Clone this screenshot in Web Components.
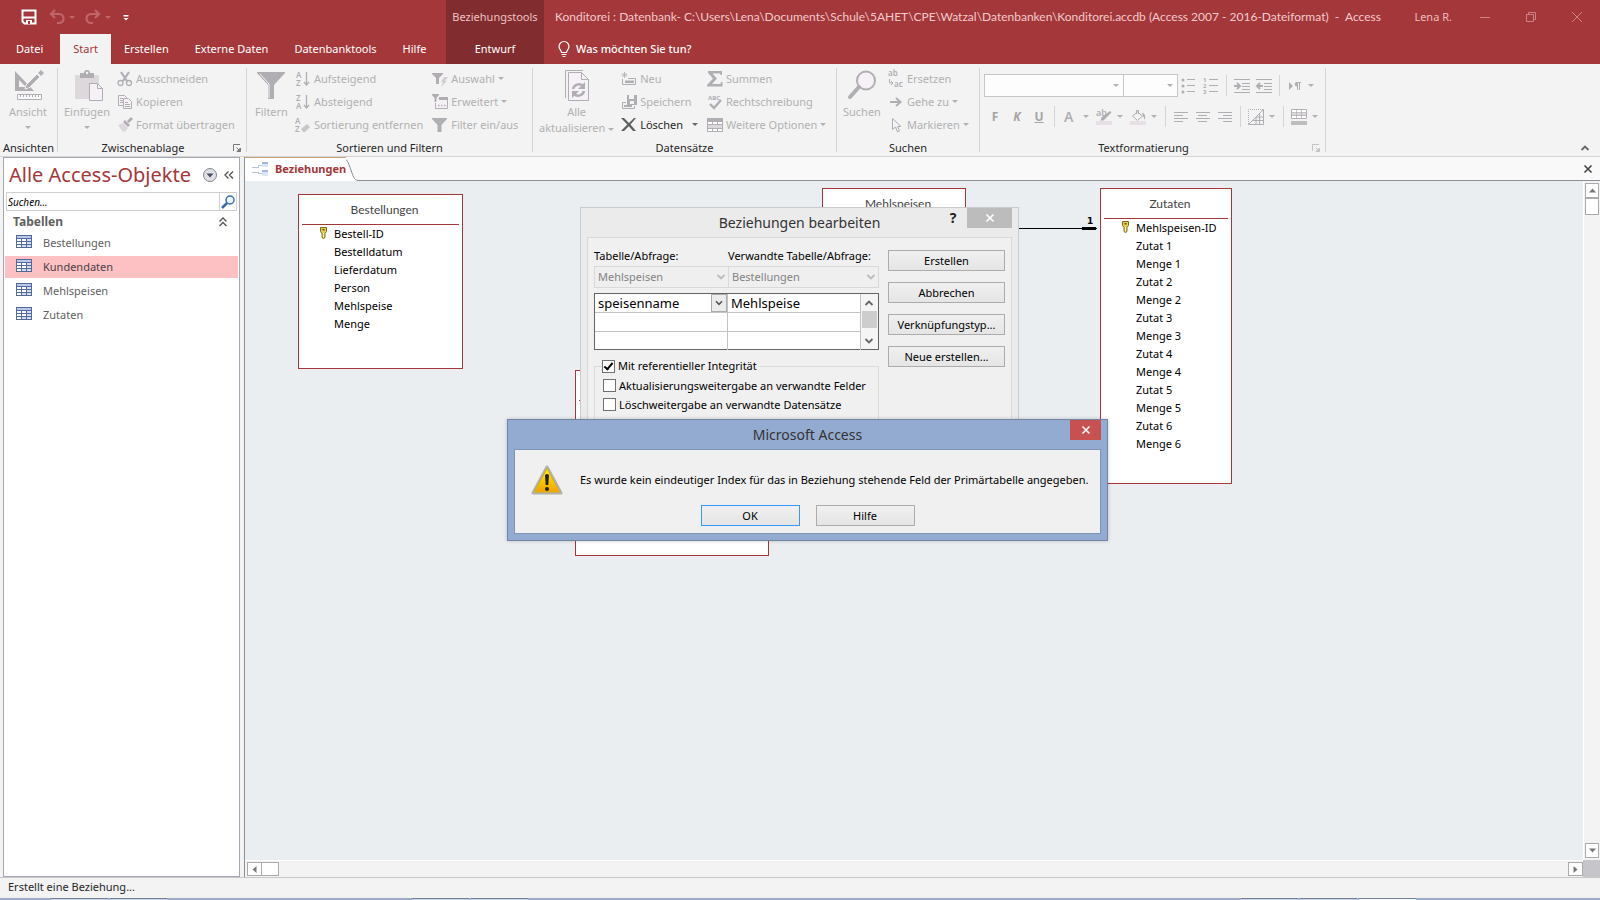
<!DOCTYPE html>
<html lang="de">
<head>
<meta charset="utf-8">
<meta name="viewport" content="width=device-width, initial-scale=1">
<title>Konditorei - Access</title>
<style>
    html, body {
        height: 100%;
        margin: 0;
        overflow: hidden;
    }
    body {
        font: 11px/16px "Noto Sans", "Open Sans", sans-serif;
        color: #262626;
        background: #f3f3f3;
    }
</style>
</head>
<body>
<access-app></access-app>

<script>
// shared by all elements: put the template into an open shadow root
class BaseElement extends HTMLElement {
    constructor() {
        super();
        this.attachShadow({mode: "open"});
    }
    connectedCallback() {
        var template = document.createElement("template");
        template.innerHTML = this.render();
        this.shadowRoot.replaceChildren(template.content.cloneNode(true));
    }
    attr(name) {
        return this.getAttribute(name) || "";
    }
}

// ICONS: [viewBox size, markup]
var icons = {
    save: [16, `<path d="M1.5 1.5h13v13h-11l-2-2z" fill="none" stroke="currentColor" stroke-width="2"/><path d="M2 8.500h12" stroke="currentColor" stroke-width="2"/><path d="M5 11h6v4H5z" fill="currentColor"/><path d="M7 12h2v3H7z" fill="#a4373a"/>`],
    undo: [16, `<path d="M6 1L2 5l4 4M2.500 5H10a4 4 0 0 1 0 9H8" fill="none" stroke="currentColor" stroke-width="2.200"/>`],
    redo: [16, `<path d="M10 1l4 4-4 4M13.500 5H6a4 4 0 0 0 0 9h2" fill="none" stroke="currentColor" stroke-width="2.200"/>`],
    customize: [16, `<path d="M5.500 6h5v1.500h-5zM5.500 9h5L8 11.500z" fill="currentColor"/>`],
    bulb: [16, `<path d="M5.500 11.500c0-2-2.500-3-2.500-6a5 5 0 0 1 10 0c0 3-2.500 4-2.500 6zM5.500 13.500h5M6.500 15.500h3" fill="none" stroke="currentColor" stroke-width="1.200"/>`],
    min: [16, `<path d="M3 8.500h10" stroke="currentColor"/>`],
    restore: [16, `<path d="M3.500 5.500h7v7h-7zM5.500 5.500v-2h7v7h-2" fill="none" stroke="currentColor"/>`],
    close: [16, `<path d="M3 3l10 10M13 3L3 13" stroke="currentColor"/>`],
    cross: [16, `<path d="M4.500 4.500l7 7M11.500 4.500l-7 7" stroke="currentColor" stroke-width="1.600"/>`],
    view: [32, `<path d="M3 2l19 20H3zM7 11v7h7z" fill="currentColor" fill-rule="evenodd"/><path d="M29 1l3 3-3 3-3-3z" fill="currentColor"/><path d="M25 5l3 3-11 11-4 1 1-4z" fill="currentColor" stroke="#f3f3f3"/><path d="M12 22l5-3 5 3z" fill="currentColor"/><path d="M5.500 25.500h24v5h-24z" fill="#faf8fb" stroke="currentColor"/><path d="M8.500 26v2M11.500 26v2M14.500 26v2M17.500 26v2M20.500 26v2M23.500 26v2M26.500 26v2" stroke="currentColor"/>`],
    paste: [32, `<path d="M4 6h24v24H4z" fill="#dcd8dc"/><path d="M9 4h4a3 3 0 0 1 6 0h4v5H9z" fill="currentColor"/><circle cx="16" cy="4" r="1.200" fill="#f3f3f3"/><path d="M18.500 14.500h8l5 5v12h-13z" fill="#f5f1f7" stroke="currentColor"/><path d="M26.500 14.500v5h5" fill="none" stroke="currentColor"/>`],
    cut: [16, `<path d="M4 1l6 9M12 1L6 10" stroke="currentColor" stroke-width="2.200"/><circle cx="3.500" cy="12" r="2.500" fill="none" stroke="currentColor" stroke-width="1.300"/><circle cx="12" cy="12" r="2.500" fill="none" stroke="currentColor" stroke-width="1.300"/>`],
    copy: [16, `<path d="M1.500 1.500h6l2 2v8h-8z" fill="#f5f1f7" stroke="currentColor"/><path d="M3 4.500h3M3 6.500h3M3 8.500h3" stroke="currentColor"/><path d="M6.500 4.500h5l3 3v7h-8z" fill="#f5f1f7" stroke="currentColor"/><path d="M8 8.500h3M8 10.500h5M8 12.500h5" stroke="currentColor"/>`],
    brush: [16, `<path d="M1 8l5-2 5 5-3 4-3-1z" fill="#dcd8dc"/><path d="M6 5l2-2 5 5-2 2z" fill="currentColor"/><path d="M10 4l4-4 2 2-4 4z" fill="currentColor"/>`],
    filterbig: [32, `<path d="M2 3h28v1L19 16v14h-6V16L2 4z" fill="currentColor"/><path d="M5 5l9 10v14" fill="none" stroke="#f3f3f3"/>`],
    az: [16, `<g fill="currentColor" font-family="Noto Sans, sans-serif" font-weight="600" font-size="8"><text x="1" y="7">A</text><text x="1" y="15">Z</text></g><path d="M11.500 1v12M9 11l2.500 3 2.500-3" fill="none" stroke="currentColor" stroke-width="1.300"/>`],
    za: [16, `<g fill="currentColor" font-family="Noto Sans, sans-serif" font-weight="600" font-size="8"><text x="1" y="7">Z</text><text x="1" y="15">A</text></g><path d="M11.500 1v12M9 11l2.500 3 2.500-3" fill="none" stroke="currentColor" stroke-width="1.300"/>`],
    azclear: [16, `<g fill="currentColor" font-family="Noto Sans, sans-serif" font-weight="600" font-size="8"><text x="0" y="7">A</text><text x="0" y="15">Z</text></g><path d="M6 12l6-5 3 3-5 5H8z" fill="#c9c6ca"/>`],
    selection: [16, `<path d="M0 2h11v1L7 7v6H4V7L0 3z" fill="currentColor"/><path d="M12 6h4l-3 4h2l-6 6 2-5H9z" fill="#d3cfd4"/>`],
    advanced: [16, `<path d="M0 0h7v1L4.500 4v4h-2V4L0 1z" fill="currentColor"/><path d="M3.500 9v5.500h12v-10h-9" fill="#f5f1f7" stroke="currentColor"/><path d="M7 3h9v3H7z" fill="currentColor"/><path d="M6 11.500h1.500M9 11.500h1.500M12 11.500h1.500" stroke="currentColor" stroke-width="1.500"/>`],
    filter: [16, `<path d="M0 1h15v1L9.500 8v7h-4V8L0 2z" fill="currentColor"/>`],
    refresh: [32, `<path d="M4.500 29V1.500H22" fill="none" stroke="currentColor"/><path d="M7.500 3.500h13l7 7v21h-20z" fill="#f5f1f7" stroke="currentColor"/><path d="M20.500 3.500v7h7" fill="none" stroke="currentColor"/><path d="M12 20a6 6 0 0 1 10-3M23 22a6 6 0 0 1-10 3" fill="none" stroke="currentColor" stroke-width="2.500"/><path d="M24 13v7h-7zM11 29v-7h7z" fill="currentColor"/>`],
    create: [16, `<path d="M1.500 8v5.500h13v-6H7" fill="none" stroke="currentColor"/><path d="M4 9.500h9v2.500H4z" fill="currentColor"/><path d="M3.500 1v6M.5 4h6M1.500 2l4 4M5.500 2l-4 4" stroke="currentColor" stroke-width=".8"/>`],
    saverec: [16, `<path d="M6 1h10v10H6z" fill="currentColor"/><path d="M8 1h5v4H8zM9 7h4v3H9z" fill="#f3f3f3"/><path d="M5 8.500H1.500v6h12V12" fill="none" stroke="currentColor"/><path d="M3 11h8v2H3z" fill="currentColor"/>`],
    remove: [16, `<path d="M0 1l3 0 5 5 5-5h2L9.500 7.500 15 14h-3L7.800 9.300 3 14H0l6.300-6.500z" fill="#5f5f5f"/>`],
    sum: [16, `<path d="M1 0h14v4h-1.500L13 2.500H5.500L10 7.500 5 13h8.500l.5-2h1.500v4.500H0V14l6-6.500L1 2z" fill="currentColor"/>`],
    spell: [16, `<text x="1" y="6" fill="currentColor" font-family="Noto Sans, sans-serif" font-weight="700" font-size="6">ABC</text><path d="M3 10l4 4 7-8" fill="none" stroke="currentColor" stroke-width="2.400"/>`],
    more: [16, `<path d="M0 1h16v14H0z" fill="currentColor"/><path d="M1 5h4v2H1zM6 5h4v2H6zM11 5h4v2h-4zM1 12h4v2H1zM6 12h4v2H6zM11 12h4v2h-4z" fill="#fff"/><path d="M1 8h14v3H1z" fill="#dcd8dc"/>`],
    find: [32, `<circle cx="20" cy="11.500" r="9" fill="#f5f1f7" stroke="currentColor" stroke-width="2"/><path d="M13 18L4 28" stroke="currentColor" stroke-width="4" stroke-linecap="round"/>`],
    replace: [16, `<g fill="currentColor" font-family="Noto Sans, sans-serif" font-weight="600" font-size="8"><text x="0" y="5">ab</text><text x="6" y="16">ac</text></g><path d="M1.500 8v4H4M3 10l2 2-2 2" fill="none" stroke="currentColor"/>`],
    goto: [16, `<path d="M2 8h9M8 4l4.500 4L8 12" fill="none" stroke="currentColor" stroke-width="2"/>`],
    pointer: [16, `<path d="M4.500 1.500v11l3-2.500 2 5 2-1-2-4.500h3.500z" fill="#f5f1f7" stroke="currentColor"/>`],
    bullets: [16, `<g fill="currentColor"><circle cx="2" cy="2" r="1.500"/><circle cx="2" cy="8" r="1.500"/><circle cx="2" cy="14" r="1.500"/></g><path d="M6 1.500h8M6 7.500h8M6 13.500h8" stroke="currentColor"/>`],
    numbers: [16, `<g fill="currentColor" font-family="Noto Sans, sans-serif" font-weight="700" font-size="6"><text x="0" y="4">1</text><text x="0" y="10">2</text><text x="0" y="16">3</text></g><path d="M6 1.500h9M6 7.500h9M6 13.500h9" stroke="currentColor"/>`],
    indent: [16, `<path d="M0 1.500h16M8 5.500h8M8 8.500h8M8 11.500h8M0 14.500h16" stroke="currentColor"/><path d="M0 8h5M3 5l3 3-3 3" fill="none" stroke="currentColor" stroke-width="2"/>`],
    outdent: [16, `<path d="M0 1.500h16M8 5.500h8M8 8.500h8M8 11.500h8M0 14.500h16" stroke="currentColor"/><path d="M2 8h5M4 5L1 8l3 3" fill="none" stroke="currentColor" stroke-width="2"/>`],
    para: [16, `<path d="M2 4l4 4-4 4zM10 4h4v1h-1v7h-1V5h-1v7h-1V8.500a2 2 0 0 1 0-4.500z" fill="currentColor"/>`],
    fontcolor: [16, `<text x="2" y="13" fill="currentColor" font-family="Noto Sans, sans-serif" font-weight="600" font-size="14">A</text>`],
    highlight: [16, `<text x="0" y="7" fill="currentColor" font-family="Noto Sans, sans-serif" font-weight="600" font-size="9">ab</text><path d="M14 2l1.500 1.500-8 8-3 0 1-3z" fill="currentColor"/><path d="M0 12h16v4H0z" fill="#e6e0e6"/>`],
    bucket: [16, `<path d="M2.500 7l5-4 5 4-5 4.500zM6.500 5V1.500h2V5" fill="none" stroke="currentColor"/><path d="M12 4c3 0 3.500 3 3 7l-2-4z" fill="currentColor"/><path d="M0 12h16v4H0z" fill="#e6e0e6"/>`],
    left: [16, `<path d="M1 3.500h14M1 6.500h9M1 9.500h14M1 12.500h9" stroke="currentColor"/>`],
    center: [16, `<path d="M1 3.500h14M3 6.500h9M1 9.500h14M3 12.500h9" stroke="currentColor"/>`],
    right: [16, `<path d="M1 3.500h14M6 6.500h9M1 9.500h14M6 12.500h9" stroke="currentColor"/>`],
    gridlines: [16, `<path d="M.5 15V.5H15" fill="none" stroke="currentColor" stroke-dasharray="1 1"/><path d="M.5 15.500L15.500.5v15zM8 8v7M11.500 4v11M8 8h7M4.500 11.500h11" fill="none" stroke="currentColor"/>`],
    rowcolor: [16, `<path d="M.5 .5h15v9H.5z" fill="#fff" stroke="currentColor"/><path d="M1 4h14v3H1z" fill="#dcd8dc"/><path d="M5.500 1v8M10.500 1v8M1 3.500h14M1 6.500h14" stroke="currentColor" stroke-width=".7"/><path d="M0 12h16v4H0z" fill="#bdbdbd"/>`],
    launcher: [9, `<path d="M.5 7V.5H7" fill="none" stroke="currentColor"/><path d="M3.500 3.500L6 6" stroke="currentColor"/><path d="M7.500 4v3.500H4z" fill="currentColor" stroke="currentColor"/>`],
    up: [16, `<path d="M4.500 10L8 6.500l3.500 3.500" fill="none" stroke="currentColor" stroke-width="1.800"/>`],
    down: [16, `<path d="M4.500 6L8 9.500 11.500 6" fill="none" stroke="currentColor" stroke-width="1.800"/>`],
    table: [16, `<path d="M0 1h16v13H0z" fill="#53699b"/><path d="M1 2h14v2H1z" fill="#b7c8e8"/><path d="M1 5h4v2H1zM6 5h4v2H6zM1 8h4v2H1zM6 8h4v2H6zM1 11h4v2H1z" fill="#fff"/><path d="M11 5h4v2h-4zM11 8h4v2h-4zM6 11h4v2H6zM11 11h4v2h-4z" fill="#cfdcf3"/>`],
    shutter: [16, `<circle cx="8" cy="8" r="6.500" fill="#dfe1e7" stroke="#85878e"/><path d="M4.500 6.500h7L8 10.500z" fill="#4b4e5c"/>`],
    collapse: [16, `<path d="M7.500 4.500L4 8l3.500 3.500M12 4.500L8.500 8l3.500 3.500" fill="none" stroke="#555" stroke-width="1.400"/>`],
    chevrons: [16, `<path d="M4.500 7.500L8 4l3.500 3.500M4.500 12L8 8.500l3.500 3.500" fill="none" stroke="#555" stroke-width="1.300"/>`],
    search: [16, `<circle cx="10" cy="6" r="4" fill="#eef5fd" stroke="#3a6ea5" stroke-width="1.500"/><path d="M7 9l-5 5" stroke="#3a6ea5" stroke-width="2.500"/>`],
    relations: [16, `<path d="M0 6.500h6M0 11.500h6M6.500 7V4.500h4M6.500 11v1.500h4" fill="none" stroke="#b4c2d6"/><path d="M10 1h6v5h-6zM10 9h6v6h-6z" fill="#dde7f6"/><path d="M10 1h6v2h-6zM10 9h6v2h-6z" fill="#a3b9de"/>`],
    key: [14, `<path d="M3.500 1.500h6v4l-1.500 2v4l-1.500 1-1.500-1v-4l-1.500-2z" fill="#e4cf4f" stroke="#7c6a1c"/><path d="M5.500 3h2v1.500h-2z" fill="#5c4c0c"/><path d="M6.500 7v4" stroke="#fff7b0"/>`],
    warning: [32, `<defs><linearGradient id="w" x2="0" y2="1"><stop offset="0" stop-color="#fff200"/><stop offset="1" stop-color="#f0a400"/></linearGradient></defs><path d="M16 3L2 29h28z" fill="#c9c9c9" stroke="#b0b0b0" stroke-width="3" stroke-linejoin="round"/><path d="M16 4.500L3.500 28h25z" fill="url(#w)" stroke="#e0b000"/><path d="M14 11q2-2 4 0l-.7 10h-2.600z" fill="#222"/><circle cx="16" cy="25" r="2" fill="#222"/>`]
};

class AccessIcon extends BaseElement {
    render() {
        var icon = icons[this.attr("name")];
        return `
<style>
    :host { display: block; flex: none; width: ${icon[0]}px; height: ${icon[0]}px; }
    svg { display: block; width: 100%; height: 100%; overflow: visible; }
</style>
<svg viewBox="0 0 ${icon[0]} ${icon[0]}" aria-hidden="true">${icon[1]}</svg>`;
    }
}
customElements.define("access-icon", AccessIcon);

// TITLE BAR WITH THE RIBBON TABS
class AccessHeader extends BaseElement {
    render() {
        return `
<style>
    :host { display: flex; background: #a4373a; color: #fff; }
    button, a { font: inherit; color: inherit; background: none; border: 0; padding: 0; text-decoration: none; }
    .main { width: 446px; flex: none; }
    .row { display: flex; align-items: center; height: 34px; }
    .tabs { display: flex; height: 30px; line-height: 30px; }
    .tabs a { padding: 0 13px; }
    .tabs a:first-child { padding: 0 17px 0 16px; }
    .tabs .active { background: #f3f3f3; color: #a4373a; }
    .quick { padding-left: 21px; gap: 4px; }
    .quick button { display: flex; align-items: center; }
    .quick .off { color: #c06668; margin-left: 8px; }
    .quick .off i { border: 3px solid transparent; border-top-color: currentColor; border-bottom: 0; margin-left: 4px; }
    .quick .off + .off { margin-left: 6px; }
    .quick .more { margin-left: 3px; }
    .context { width: 98px; flex: none; background: #812c2f; text-align: center; }
    .context .row { justify-content: center; color: #f0c2c3; }
    .context .tabs { justify-content: center; }
    .context .tabs a { padding: 0; }
    .rest { flex: 1; min-width: 0; }
    .title { flex: 1; min-width: 0; padding-left: 11px; font-family: Lato, sans-serif; font-size: 12px; color: #f3cbcc; white-space: pre; overflow: hidden; }
    .user { color: #eebcbd; padding-right: 10px; }
    .win { width: 46px; height: 34px; display: flex; justify-content: center; align-items: center; color: #cf8284; }
    .tell { display: flex; align-items: center; gap: 4px; height: 30px; padding-left: 12px; font-weight: 500; }
</style>
<div class="main">
    <div class="row quick">
        <button aria-label="Speichern"><access-icon name="save"></access-icon></button>
        <button class="off" aria-label="Rückgängig"><access-icon name="undo"></access-icon><i></i></button>
        <button class="off" aria-label="Wiederholen"><access-icon name="redo"></access-icon><i></i></button>
        <button class="more" aria-label="Anpassen"><access-icon name="customize"></access-icon></button>
    </div>
    <nav class="tabs">
        <a href="#datei">Datei</a>
        <a href="#start" class="active">Start</a>
        <a href="#erstellen">Erstellen</a>
        <a href="#extern">Externe Daten</a>
        <a href="#tools">Datenbanktools</a>
        <a href="#hilfe">Hilfe</a>
    </nav>
</div>
<div class="context">
    <div class="row">Beziehungstools</div>
    <nav class="tabs"><a href="#entwurf">Entwurf</a></nav>
</div>
<div class="rest">
    <div class="row">
        <div class="title">Konditorei : Datenbank- C:\\Users\\Lena\\Documents\\Schule\\5AHET\\CPE\\Watzal\\Datenbanken\\Konditorei.accdb (Access 2007 - 2016-Dateiformat)  -  Access</div>
        <div class="user">Lena R.</div>
        <button class="win" aria-label="Minimieren"><access-icon name="min"></access-icon></button>
        <button class="win" aria-label="Verkleinern"><access-icon name="restore"></access-icon></button>
        <button class="win" aria-label="Schließen"><access-icon name="close"></access-icon></button>
    </div>
    <button class="tell"><access-icon name="bulb"></access-icon>Was möchten Sie tun?</button>
</div>`;
    }
}
customElements.define("access-header", AccessHeader);

// RIBBON BUTTON: small by default, large with the icon on top
class RibbonButton extends BaseElement {
    render() {
        var arrow = this.hasAttribute("menu") ? "<i></i>" : "";
        return `
<style>
    :host { display: block; color: #b1b1b1; }
    :host([active]) { color: #262626; }
    button { display: flex; align-items: center; gap: 3px; height: 23px; padding: 0; border: 0; background: none; font: inherit; color: inherit; white-space: nowrap; }
    access-icon { color: #b1aeb3; }
    i { border: 3px solid transparent; border-top-color: currentColor; border-bottom: 0; }
    :host([active]) i { border-top-color: #666; margin-left: 6px; }
    :host([large]) button { flex-direction: column; height: auto; padding: 2px 4px 0; gap: 0; }
    :host([large]) access-icon { margin-bottom: 3px; }
    :host([large]) .text { text-align: center; line-height: 16px; }
    :host([large]) i { margin-top: 6px; }
    :host([tool]) button { gap: 0; padding: 0 3px; }
    :host([tool]) i { margin: 0 3px 0 5px; }
    :host([tool][menu]) button { padding-right: 1px; }
    .letter { width: 16px; text-align: center; font-size: 12px; font-weight: 700; color: #a5a5a5; }
</style>
<button aria-label="${this.attr("label")}" ${this.hasAttribute("active") ? "" : "disabled"}>
    ${this.attr("icon") ? `<access-icon name="${this.attr("icon")}"></access-icon>` : ""}
    <span class="${this.hasAttribute("letter") ? "letter" : "text"}"><slot></slot></span>${arrow}
</button>`;
    }
    connectedCallback() {
        super.connectedCallback();
        // the visible text names the button when there is no label
        if (!this.attr("label")) {
            this.shadowRoot.querySelector("button").removeAttribute("aria-label");
        }
    }
}
customElements.define("ribbon-button", RibbonButton);

// RIBBON GROUP: content above, caption below
class RibbonGroup extends BaseElement {
    render() {
        var launcher = this.attr("launcher");
        return `
<style>
    :host { display: flex; flex-direction: column; position: relative; box-sizing: border-box; flex: none; padding: 3px 1px 0 0; }
    :host::after { content: ""; position: absolute; right: 0; top: 4px; bottom: 4px; width: 1px; background: #d4d4d4; }
    .body { display: flex; height: 73px; padding-left: var(--group-start, 2px); }
    .foot { display: grid; grid-template-columns: 1fr; align-items: center; height: 16px; text-align: center; white-space: nowrap; }
    .foot.more { grid-template-columns: 1fr 18px; }
    .launch { display: flex; justify-content: center; border: 0; padding: 0; background: none; color: #777; }
    .launch.off { color: #c4c4c4; }
</style>
<div class="body"><slot></slot></div>
<div class="foot ${launcher ? "more" : ""}">
    <span>${this.attr("caption")}</span>
    ${launcher ? `<button class="launch ${launcher}" aria-label="${this.attr("caption")} öffnen"><access-icon name="launcher"></access-icon></button>` : ""}
</div>`;
    }
}
customElements.define("ribbon-group", RibbonGroup);

class AccessRibbon extends BaseElement {
    render() {
        return `
<style>
    :host { display: flex; background: #f3f3f3; border-bottom: 1px solid #d4d4d4; }
    .views { width: 58px; --group-start: 5px; }
    .clip { width: 189px; }
    .sort { width: 286px; --group-start: 4px; }
    .records { width: 304px; --group-start: 2px; }
    .search { width: 143px; }
    .format { width: 346px; --group-start: 4px; }
    .stack { margin-left: 3px; }
    .stack + .stack { margin-left: 9px; }
    .tri { display: inline-block; vertical-align: middle; border: 3px solid transparent; border-top-color: currentColor; border-bottom: 0; }
    .tools { display: flex; flex-direction: column; gap: 8px; padding-top: 7px; }
    .line { display: flex; align-items: center; height: 23px; }
    .line hr { width: 1px; height: 21px; border: 0; margin: 0 4px; background: #d4d4d4; }
    select { appearance: none; box-sizing: border-box; height: 23px; border: 1px solid #c6c6c6; border-radius: 0; background: #fdfdfd; font: inherit; opacity: 1; }
    .combo { position: relative; display: flex; }
    .combo::after { content: ""; position: absolute; right: 5px; top: 10px; border: 3px solid transparent; border-top-color: #b1b1b1; border-bottom: 0; }
    .face { width: 140px; }
    .size { width: 55px; margin-left: -1px; }
    .combo select { width: 100%; }
    u, em { font-weight: 700; }
    .fold { margin: auto 7px 0 auto; padding: 0; border: 0; background: none; color: #666; }
</style>
<ribbon-group class="views" caption="Ansichten">
    <ribbon-button large menu icon="view">Ansicht</ribbon-button>
</ribbon-group>
<ribbon-group class="clip" caption="Zwischenablage" launcher="on">
    <ribbon-button large menu icon="paste">Einfügen</ribbon-button>
    <div class="stack">
        <ribbon-button icon="cut">Ausschneiden</ribbon-button>
        <ribbon-button icon="copy">Kopieren</ribbon-button>
        <ribbon-button icon="brush">Format übertragen</ribbon-button>
    </div>
</ribbon-group>
<ribbon-group class="sort" caption="Sortieren und Filtern">
    <ribbon-button large icon="filterbig">Filtern</ribbon-button>
    <div class="stack">
        <ribbon-button icon="az">Aufsteigend</ribbon-button>
        <ribbon-button icon="za">Absteigend</ribbon-button>
        <ribbon-button icon="azclear">Sortierung entfernen</ribbon-button>
    </div>
    <div class="stack">
        <ribbon-button menu icon="selection">Auswahl</ribbon-button>
        <ribbon-button menu icon="advanced">Erweitert</ribbon-button>
        <ribbon-button icon="filter">Filter ein/aus</ribbon-button>
    </div>
</ribbon-group>
<ribbon-group class="records" caption="Datensätze">
    <ribbon-button large icon="refresh">Alle<br>aktualisieren <span class="tri"></span></ribbon-button>
    <div class="stack">
        <ribbon-button icon="create">Neu</ribbon-button>
        <ribbon-button icon="saverec">Speichern</ribbon-button>
        <ribbon-button active menu icon="remove">Löschen</ribbon-button>
    </div>
    <div class="stack">
        <ribbon-button icon="sum">Summen</ribbon-button>
        <ribbon-button icon="spell">Rechtschreibung</ribbon-button>
        <ribbon-button menu icon="more">Weitere Optionen</ribbon-button>
    </div>
</ribbon-group>
<ribbon-group class="search" caption="Suchen">
    <ribbon-button large icon="find">Suchen</ribbon-button>
    <div class="stack">
        <ribbon-button icon="replace">Ersetzen</ribbon-button>
        <ribbon-button menu icon="goto">Gehe zu</ribbon-button>
        <ribbon-button menu icon="pointer">Markieren</ribbon-button>
    </div>
</ribbon-group>
<ribbon-group class="format" caption="Textformatierung" launcher="off">
    <div class="tools">
        <div class="line">
            <div class="combo face"><select aria-label="Schriftart" disabled></select></div>
            <div class="combo size"><select aria-label="Schriftgrad" disabled></select></div>
            <ribbon-button tool icon="bullets" label="Aufzählung"></ribbon-button>
            <ribbon-button tool icon="numbers" label="Nummerierung"></ribbon-button>
            <hr>
            <ribbon-button tool icon="indent" label="Einzug vergrößern"></ribbon-button>
            <ribbon-button tool icon="outdent" label="Einzug verkleinern"></ribbon-button>
            <hr>
            <ribbon-button tool menu icon="para" label="Textrichtung"></ribbon-button>
        </div>
        <div class="line">
            <ribbon-button tool letter label="Fett">F</ribbon-button>
            <ribbon-button tool letter label="Kursiv"><em>K</em></ribbon-button>
            <ribbon-button tool letter label="Unterstrichen"><u>U</u></ribbon-button>
            <hr>
            <ribbon-button tool menu icon="fontcolor" label="Schriftfarbe"></ribbon-button>
            <ribbon-button tool menu icon="highlight" label="Hervorheben"></ribbon-button>
            <ribbon-button tool menu icon="bucket" label="Hintergrund"></ribbon-button>
            <hr>
            <ribbon-button tool icon="left" label="Linksbündig"></ribbon-button>
            <ribbon-button tool icon="center" label="Zentriert"></ribbon-button>
            <ribbon-button tool icon="right" label="Rechtsbündig"></ribbon-button>
            <hr>
            <ribbon-button tool menu icon="gridlines" label="Gitternetz"></ribbon-button>
            <hr>
            <ribbon-button tool menu icon="rowcolor" label="Zeilenfarbe"></ribbon-button>
        </div>
    </div>
</ribbon-group>
<button class="fold" aria-label="Menüband reduzieren"><access-icon name="up"></access-icon></button>`;
    }
}
customElements.define("access-ribbon", AccessRibbon);

// NAVIGATION PANE
class NavItem extends BaseElement {
    render() {
        return `
<style>
    :host { display: block; margin-bottom: 2px; }
    a { display: flex; align-items: center; gap: 11px; height: 22px; padding-left: 11px; color: #5f5f5f; text-decoration: none; }
    :host([selected]) a { background: #fdc1c3; color: #4a4043; }
    access-icon { margin-bottom: 2px; }
</style>
<a href="#tabelle"><access-icon name="table"></access-icon><slot></slot></a>`;
    }
}
customElements.define("nav-item", NavItem);

class NavPane extends BaseElement {
    render() {
        return `
<style>
    :host { display: flex; flex-direction: column; box-sizing: border-box; width: 237px; margin-left: 3px; background: #fff; border: 1px solid #a5a9b4; }
    button { border: 0; padding: 0; background: none; }
    header { display: flex; align-items: center; height: 34px; padding: 0 2px 0 5px; }
    h1 { flex: 1; margin: 0; font-size: 20px; line-height: 34px; font-weight: 400; color: #a4373a; white-space: nowrap; }
    header button { margin-left: 3px; }
    .find { display: flex; align-items: center; height: 17px; margin: 0 2px; border: 1px solid #cfcfcf; }
    input { flex: 1; min-width: 0; box-sizing: border-box; height: 17px; padding: 0 1px; border: 0; border-right: 1px solid #cfcfcf; font: italic 10px/15px "Noto Sans", sans-serif; }
    input::placeholder { color: #000; opacity: 1; }
    h2 { display: flex; justify-content: space-between; align-items: center; height: 20px; margin: 0; padding: 1px 8px 0 9px; font-size: 12px; color: #5f5f5f; }
    .list { padding: 0 1px; }
</style>
<header>
    <h1>Alle Access-Objekte</h1>
    <button aria-label="Kategorie wählen"><access-icon name="shutter"></access-icon></button>
    <button aria-label="Bereich schließen"><access-icon name="collapse"></access-icon></button>
</header>
<div class="find">
    <input type="search" placeholder="Suchen..." aria-label="Suchen">
    <button aria-label="Suche starten"><access-icon name="search"></access-icon></button>
</div>
<h2>Tabellen <access-icon name="chevrons"></access-icon></h2>
<div class="list">
    <nav-item>Bestellungen</nav-item>
    <nav-item selected>Kundendaten</nav-item>
    <nav-item>Mehlspeisen</nav-item>
    <nav-item>Zutaten</nav-item>
</div>`;
    }
}
customElements.define("nav-pane", NavPane);

// TABLE BOX OF THE RELATIONSHIP DIAGRAM, first field is the key
class RelationTable extends BaseElement {
    render() {
        var fields = this.attr("fields") ? this.attr("fields").split(",") : [];
        return `
<style>
    :host { display: block; box-sizing: border-box; background: #fff; border: 1px solid #a4373a; }
    h3 { height: 29px; margin: 0 3px; padding-left: 8px; border-bottom: 1px solid #a4373a; font-size: 12px; line-height: 30px; font-weight: 400; font-family: Lato, sans-serif; color: #444; text-align: center; }
    ul { margin: 0; padding: 0; list-style: none; color: #000; }
    li { display: flex; height: 18px; line-height: 18px; padding-left: 35px; }
    li:first-child { padding-left: 18px; }
    li access-icon { margin: 1px 3px 0 0; }
</style>
<h3>${this.attr("heading")}</h3>
<ul>${fields.map((f, i) => `<li>${i ? "" : `<access-icon name="key"></access-icon>`}${f}</li>`).join("")}</ul>`;
    }
}
customElements.define("relation-table", RelationTable);

class ScrollBar extends BaseElement {
    render() {
        return `
<style>
    :host { display: flex; flex-direction: column; box-sizing: border-box; background: #f3f3f3; padding: 2px 1px; border-left: 1px solid #fff; }
    button, .thumb { box-sizing: border-box; height: 15px; padding: 0; border: 1px solid #ababab; background: #fff; display: flex; align-items: center; justify-content: center; }
    .thumb { height: 17px; }
    .space { flex: 1; }
    svg { width: 7px; height: 7px; fill: #777; }
    :host([horizontal]) { flex-direction: row; padding: 1px 0 1px 2px; border: 0; border-top: 1px solid #fff; }
    :host([horizontal]) button { width: 15px; height: auto; }
    :host([horizontal]) .thumb { width: 18px; height: auto; margin-left: -1px; }
    :host([horizontal]) svg { transform: rotate(-90deg); }
</style>
<button aria-label="Zurück"><svg viewBox="0 0 7 7"><path d="M0 5.500h7L3.500 1.500z"/></svg></button>
<div class="thumb"></div>
<div class="space"></div>
<button aria-label="Weiter"><svg viewBox="0 0 7 7"><path d="M0 1.500h7L3.500 5.500z"/></svg></button>`;
    }
}
customElements.define("scroll-bar", ScrollBar);

// DOCUMENT AREA WITH THE DIAGRAM
class RelationDocument extends BaseElement {
    render() {
        return `
<style>
    :host { display: flex; flex-direction: column; flex: 1; min-width: 0; box-sizing: border-box; margin-left: 4px; border-left: 1px solid #8b9097; }
    .bar { display: flex; justify-content: space-between; height: 23px; background: #f9f9f9; border-bottom: 1px solid #8b9097; }
    .tab { display: flex; align-items: center; height: 24px; padding: 0; border: 0; background: none; font: inherit; font-weight: 700; color: #a4373a; }
    .tab span { display: flex; align-items: center; gap: 7px; box-sizing: border-box; height: 24px; padding: 0 0 2px 7px; background: #fff; border-top: 1px solid #c9a27c; z-index: 1; }
    .tab svg { width: 18px; height: 24px; margin-left: -6px; }
    .close { border: 0; padding: 0 4px; background: none; color: #444; }
    .view { flex: 1; display: grid; grid-template: 1fr 17px / 1fr 17px; min-height: 0; }
    .canvas { position: relative; overflow: hidden; background: #eaeef1; }
    .corner { background: #c6c6ca; }
    relation-table { position: absolute; }
    .orders { left: 53px; top: 13px; width: 165px; height: 175px; }
    .cakes { left: 577px; top: 7px; width: 144px; height: 200px; }
    .people { left: 330px; top: 189px; width: 194px; height: 186px; }
    .parts { left: 855px; top: 7px; width: 132px; height: 296px; }
    .link { position: absolute; left: 722px; top: 34px; width: 130px; height: 16px; }
</style>
<div class="bar">
    <button class="tab"><span><access-icon name="relations"></access-icon>Beziehungen</span><svg viewBox="0 0 18 24"><path d="M0 .5C7 .5 8 5 11 13C13 19 14 23 18 23.500V24H0z" fill="#fff"/><path d="M0 .5C7 .5 8 5 11 13C13 19 14 23 18 23.500" fill="none" stroke="#8b9097"/></svg></button>
    <button class="close" aria-label="Schließen"><access-icon name="cross"></access-icon></button>
</div>
<div class="view">
    <div class="canvas">
        <relation-table class="orders" heading="Bestellungen" fields="Bestell-ID,Bestelldatum,Lieferdatum,Person,Mehlspeise,Menge"></relation-table>
        <relation-table class="cakes" heading="Mehlspeisen"></relation-table>
        <relation-table class="people"></relation-table>
        <relation-table class="parts" heading="Zutaten" fields="Mehlspeisen-ID,Zutat 1,Menge 1,Zutat 2,Menge 2,Zutat 3,Menge 3,Zutat 4,Menge 4,Zutat 5,Menge 5,Zutat 6,Menge 6"></relation-table>
        <svg class="link" viewBox="0 0 130 16"><path d="M0 13.500h130" stroke="#000"/><path d="M115 13.500h14" stroke="#000" stroke-width="3"/><text x="120" y="9" font-family="DejaVu Sans, sans-serif" font-weight="700" font-size="9">1</text></svg>
    </div>
    <scroll-bar></scroll-bar>
    <scroll-bar horizontal></scroll-bar>
    <div class="corner"></div>
</div>`;
    }
}
customElements.define("relation-document", RelationDocument);

// WINDOW FRAME FOR THE DIALOGS
class DialogFrame extends BaseElement {
    render() {
        return `
<style>
    :host { display: flex; flex-direction: column; box-sizing: border-box; border: 1px solid #cbcbcb; background: #ebebeb; padding: 0 6px 6px; }
    :host([message]) { border-color: #7185a8; background: #94abd1; box-shadow: 0 0 4px rgba(0, 0, 0, .2); }
    header { display: grid; grid-template-columns: 1fr auto 1fr; align-items: start; height: 29px; }
    h2 { grid-column: 2; margin: 0; font-size: 14px; line-height: 30px; font-weight: 400; color: #333; white-space: nowrap; }
    .buttons { display: flex; justify-content: flex-end; }
    button { display: flex; align-items: center; justify-content: center; height: 20px; padding: 0; border: 0; background: none; color: #fff; }
    .help { width: 28px; font: 700 14px/20px "Noto Sans", sans-serif; color: #222; }
    .close { width: 45px; background: #bcbcbc; }
    :host([message]) .close { width: 31px; background: #c75050; }
    .content { flex: 1; background: #f0f0f0; border: 1px solid #d9d9d9; }
    :host([message]) .content { border-color: #7f93b5; }
</style>
<header>
    <h2>${this.attr("heading")}</h2>
    <div class="buttons">
        ${this.hasAttribute("message") ? "" : `<button class="help" aria-label="Hilfe">?</button>`}
        <button class="close" aria-label="Schließen"><access-icon name="cross"></access-icon></button>
    </div>
</header>
<div class="content"><slot></slot></div>`;
    }
}
customElements.define("dialog-frame", DialogFrame);

class PushButton extends BaseElement {
    render() {
        return `
<style>
    :host { display: block; }
    button { box-sizing: border-box; width: 100%; height: 21px; padding: 0; border: 1px solid #acacac; background: linear-gradient(#f0f0f0, #e5e5e5); font: inherit; color: #000; }
    :host([primary]) button { border-color: #3399ff; }
</style>
<button><slot></slot></button>`;
    }
}
customElements.define("push-button", PushButton);

class EditRelation extends BaseElement {
    render() {
        return `
<style>
    :host { display: block; width: 439px; color: #000; }
    .layout { display: flex; gap: 9px; padding: 10px 6px 0; min-height: 230px; box-sizing: border-box; }
    .fields { width: 285px; }
    .heads { display: grid; grid-template-columns: 134px 151px; white-space: nowrap; }
    .combo { display: flex; position: relative; }
    .combo:first-of-type { margin-right: -1px; }
    .combo access-icon { position: absolute; right: 0; top: 3px; color: #bcbcbc; }
    .heads select { appearance: none; flex: 1; width: 100%; height: 22px; padding: 0 3px; border: 1px solid #d9d9d9; border-radius: 0; background: #efefef; font: inherit; color: #838383; opacity: 1; }
    .heads label { padding-bottom: 2px; }
    .grid { display: flex; box-sizing: border-box; height: 57px; margin: 5px 0 0; border: 1px solid #646464; background: #fff; }
    table { flex: 1; border-collapse: collapse; table-layout: fixed; font-size: 13px; }
    td { height: 18px; padding: 0; border: 1px solid #c3c3c3; border-width: 0 1px 1px 0; line-height: 18px; }
    td:first-child { width: 132px; }
    tr:last-child td { border-bottom: 0; }
    td + td { padding-left: 3px; }
    .pick { display: flex; position: relative; }
    .pick select { appearance: none; width: 100%; height: 18px; padding: 0 0 0 3px; border: 0; background: none; font: inherit; color: #000; }
    .pick access-icon { position: absolute; right: 0; top: 0; box-sizing: border-box; height: 18px; border: 1px solid #acacac; background: #ececec; color: #555; pointer-events: none; }
    .scroll { display: flex; flex-direction: column; width: 17px; background: #f5f5f5; color: #666; }
    .scroll button { padding: 0; border: 0; background: none; height: 17px; color: inherit; }
    .scroll i { height: 17px; margin: 0 1px; background: #cdcdcd; }
    .scroll button:last-child { margin-top: auto; }
    fieldset { margin: 8px 0 0; padding: 2px 8px 40px; min-width: 0; border: 1px solid #dcdcdc; }
    legend { margin-left: -1px; padding: 0; background: #f0f0f0; }
    .check { display: flex; align-items: center; gap: 3px; height: 19px; white-space: nowrap; }
    legend .check { height: 16px; padding-right: 2px; }
    .check input { appearance: none; box-sizing: border-box; flex: none; width: 13px; height: 13px; margin: 0; border: 1px solid #707070; background: #fff; }
    .check input:checked::before { content: ""; display: block; width: 3px; height: 7px; margin: 0 0 0 3px; border: solid #000; border-width: 0 2px 2px 0; transform: rotate(40deg); }
    .actions { flex: 1; display: flex; flex-direction: column; gap: 11px; padding-top: 2px; }
</style>
<dialog-frame role="dialog" aria-label="Beziehungen bearbeiten" heading="Beziehungen bearbeiten">
    <div class="layout">
        <div class="fields">
            <div class="heads">
                <label for="left">Tabelle/Abfrage:</label>
                <label for="right">Verwandte Tabelle/Abfrage:</label>
                <div class="combo"><select id="left" disabled><option>Mehlspeisen</option></select><access-icon name="down"></access-icon></div>
                <div class="combo"><select id="right" disabled><option>Bestellungen</option></select><access-icon name="down"></access-icon></div>
            </div>
            <div class="grid">
                <table>
                    <tr><td><div class="pick"><select aria-label="Feld"><option>speisenname</option></select><access-icon name="down"></access-icon></div></td><td>Mehlspeise</td></tr>
                    <tr><td></td><td></td></tr>
                    <tr><td></td><td></td></tr>
                </table>
                <div class="scroll">
                    <button aria-label="Nach oben"><access-icon name="up"></access-icon></button>
                    <i></i>
                    <button aria-label="Nach unten"><access-icon name="down"></access-icon></button>
                </div>
            </div>
            <fieldset>
                <legend><label class="check"><input type="checkbox" checked>Mit referentieller Integrität</label></legend>
                <label class="check"><input type="checkbox">Aktualisierungsweitergabe an verwandte Felder</label>
                <label class="check"><input type="checkbox">Löschweitergabe an verwandte Datensätze</label>
            </fieldset>
        </div>
        <div class="actions">
            <push-button>Erstellen</push-button>
            <push-button>Abbrechen</push-button>
            <push-button>Verknüpfungstyp...</push-button>
            <push-button>Neue erstellen...</push-button>
        </div>
    </div>
</dialog-frame>`;
    }
}
customElements.define("edit-relation", EditRelation);

class MessageBox extends BaseElement {
    render() {
        return `
<style>
    :host { display: block; width: 601px; color: #000; }
    .message { display: flex; align-items: center; gap: 17px; padding: 14px 0 0 16px; white-space: nowrap; }
    .actions { display: flex; justify-content: center; gap: 16px; padding: 9px 0 7px; }
    push-button { width: 99px; }
</style>
<dialog-frame message role="alertdialog" aria-label="Microsoft Access" heading="Microsoft Access">
    <div class="message"><access-icon name="warning"></access-icon><slot></slot></div>
    <div class="actions">
        <push-button primary>OK</push-button>
        <push-button>Hilfe</push-button>
    </div>
</dialog-frame>`;
    }
}
customElements.define("message-box", MessageBox);

// TOP EDGE OF THE TASKBAR AND THE STATUS LINE ABOVE IT
class StatusBar extends BaseElement {
    render() {
        return `
<style>
    :host { display: block; }
    .status { height: 20px; line-height: 18px; padding-left: 8px; border-top: 1px solid #c8c8c8; background: #f3f3f3; }
    .task { display: flex; gap: 2px; height: 2px; padding: 0 184px 0 51px; background: #9dacc0; }
    .task i { box-sizing: border-box; width: 57px; background: #d3d7dd; border-top: 1px solid #6f7f94; }
    .task .gap { margin-left: 243px; }
    .task .end { margin-left: auto; }
    .task .now { background: #fff; }
</style>
<div class="status"><slot></slot></div>
<div class="task"><i></i><i></i><i class="gap"></i><i></i><i class="end"></i><i></i><i class="now"></i></div>`;
    }
}
customElements.define("status-bar", StatusBar);

// THE WHOLE PROGRAM WINDOW
class AccessApp extends BaseElement {
    render() {
        return `
<style>
    :host { display: flex; flex-direction: column; height: 100%; position: relative; overflow: hidden; }
    main { flex: 1; display: flex; min-height: 0; }
    edit-relation, message-box { position: absolute; }
    edit-relation { left: 580px; top: 207px; }
    message-box { left: 507px; top: 419px; }
</style>
<access-header></access-header>
<access-ribbon></access-ribbon>
<main>
    <nav-pane></nav-pane>
    <relation-document></relation-document>
</main>
<status-bar>Erstellt eine Beziehung...</status-bar>
<edit-relation></edit-relation>
<message-box>Es wurde kein eindeutiger Index für das in Beziehung stehende Feld der Primärtabelle angegeben.</message-box>`;
    }
}
customElements.define("access-app", AccessApp);
</script>
</body>
</html>
